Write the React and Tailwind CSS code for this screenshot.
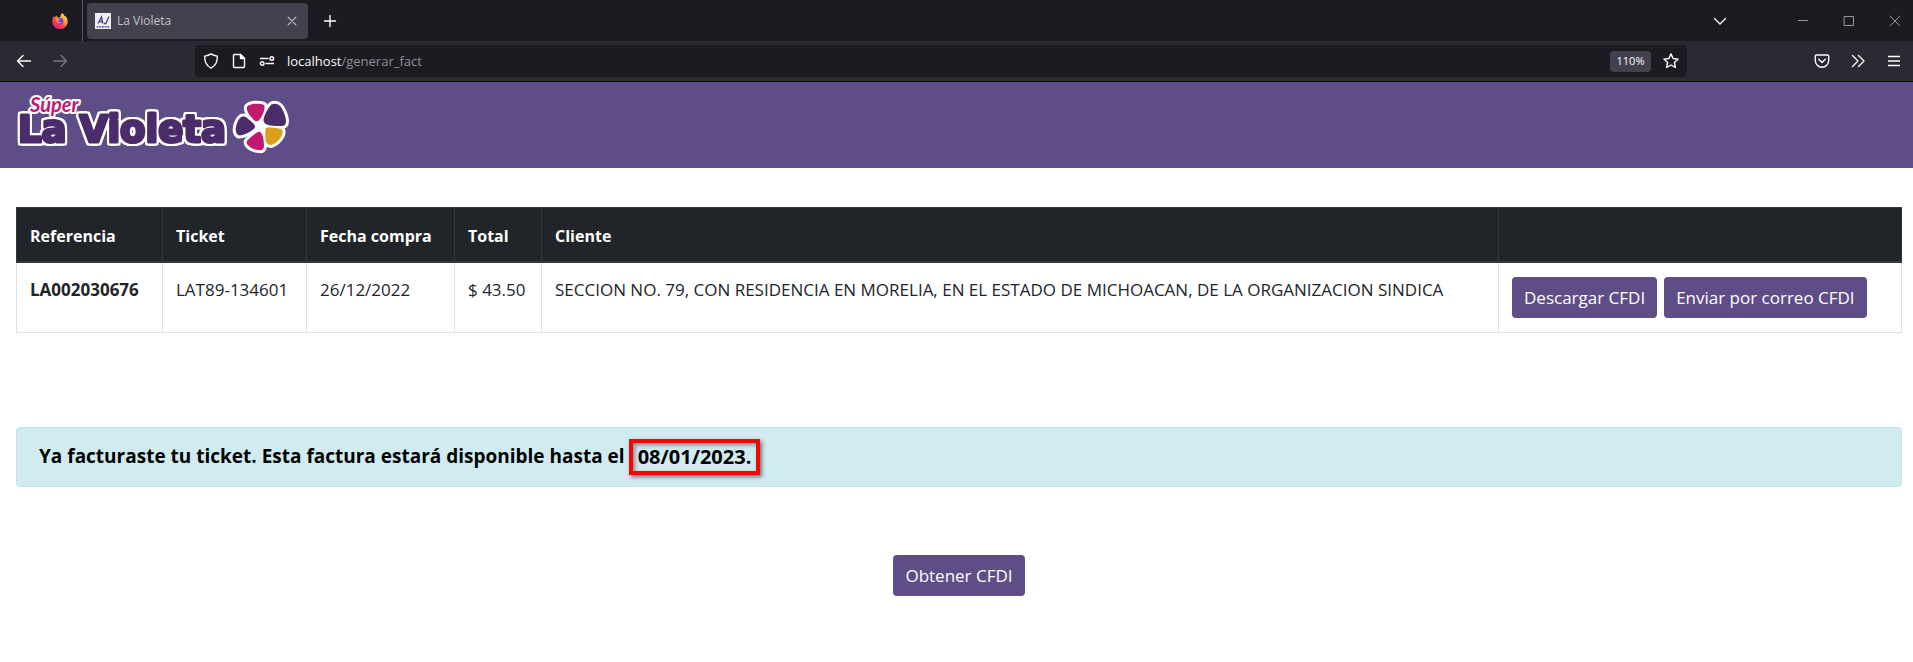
const P = {
  fill: 'none', stroke: 'currentColor', strokeWidth: 1.4, strokeLinecap: 'round', strokeLinejoin: 'round',
};

function Icon({ children, className = 'size-4', box = '0 0 16 16', ...rest }) {
  return (
    <svg viewBox={box} className={className} aria-hidden="true" {...P} {...rest}>
      {children}
    </svg>
  );
}

function Firefox() {
  return (
    <svg viewBox="0 0 16 16" className="size-4" aria-hidden="true">
      <defs>
        <linearGradient id="fire" x1="0.85" y1="0.05" x2="0.2" y2="0.95">
          <stop offset="0" stopColor="#fff04a" />
          <stop offset="0.35" stopColor="#ffa52b" />
          <stop offset="0.65" stopColor="#ff4543" />
          <stop offset="1" stopColor="#e0138a" />
        </linearGradient>
      </defs>
      <path d="M10 0c1.400.9 2.100 2 2.400 3.200C12.900 3 12.800 2.400 12.800 2.400c1.700 1.400 2.900 3.600 2.900 6C15.700 12.600 12.300 16 8 16S.3 12.600.3 8.400C.3 6.200 1 4.300 2 3c.1.8.4 1.200.7 1.500C3.500 3.600 4 3 4.600 2.600c0 .9.500 1.600 1.200 1.800h2.400C8.500 2.800 9 1.200 10 0z" fill="url(#fire)" />
      <circle cx="8.200" cy="8.300" r="3.200" fill="#7a3bd8" />
      <path d="M3.800 5.600c1.600-.6 3 .1 4.200.5-.3 1-1.700 1.100-1.900 1.900.4 1.200 2.200 1.600 3.300.9-1 2.600-5.200 2.300-5.600-3.300z" fill="#ff9a2e" />
    </svg>
  );
}

function Favicon() {
  return (
    <svg viewBox="0 0 16 16" className="size-4 shrink-0" aria-hidden="true">
      <rect width="16" height="16" fill="#efedf3" />
      <path d="M3 10.500 6.500 4l1.300 6.500M4.600 8.500h3M8.800 10.500h2L14 3.500" fill="none" stroke="#4f3f8c" strokeWidth="1.300" />
      <path d="M1.500 13.800h13" stroke="#4f3f8c" strokeWidth="1.300" strokeDasharray="2 0.700" />
    </svg>
  );
}

function Petals(props) {
  return (
    <g {...props}>
      <path className="fill-[#c2186f]" d="M247 107c2-4 14-4 17-2 2 3-2 12-4 14-2 3-5 3-7 0-3-3-7-8-6-12z" />
      <path className="fill-[#4a2c6a]" d="M264 122c-2-3 3-12 6-16 2-3 7-3 10 0 3 3 6 11 6 15 0 3-1 5-5 5-6 0-16 0-17-4z" />
      <path className="fill-[#4a2c6a]" d="M255 127c-1 3-8 7-13 8-3 1-5 0-6-3-1-4 1-11 4-14 2-2 5-2 7 0 4 3 9 7 8 9z" />
      <path className="fill-[#dba019]" d="M266 128c2-1 12 0 15 1 2 1 2 3 1 6-2 5-7 9-11 10-3 0-4-1-5-3-1-4-1-12 0-14z" />
      <path className="fill-[#c2186f]" d="M260 132c3 1 4 9 4 14 0 3-2 5-5 4-5 0-10-3-12-6-1-2 0-4 2-5 3-3 9-8 11-7z" />
    </g>
  );
}

function Logo() {
  return (
    <svg viewBox="0 0 280 66" className="h-[66px] w-[280px]" role="img" aria-label="Súper La Violeta">
      <g transform="translate(-12 -92)">
        <circle cx="260" cy="126" r="9" className="fill-white" />
        <Petals className="stroke-white stroke-[6px] [stroke-linejoin:round]" />
        <g className="[stroke-linejoin:round] [filter:drop-shadow(2px_0_#fff)_drop-shadow(-2px_0_#fff)_drop-shadow(0_2px_#fff)_drop-shadow(0_-2px_#fff)]">
          <text x="18" y="142" className="fill-[#4a2c6a] stroke-[#4a2c6a] stroke-[3px] font-['DejaVu_Sans'] text-[37px] font-bold">La Violeta</text>
        </g>
        <text x="30" y="112" className="fill-[#c2186f] stroke-white stroke-[4px] font-['Lato'] text-[20px] font-bold italic [paint-order:stroke] [stroke-linejoin:round]">Súper</text>
        <Petals />
      </g>
    </svg>
  );
}

const iconButton = 'flex size-8 items-center justify-center';

function Browser() {
  return (
    <div className="bg-[#1c1b22] font-['Open_Sans',sans-serif] text-[#fbfbfe]">
      <div className="flex h-[41px] items-center">
        <div className="flex h-full w-[83px] items-center justify-end border-r border-[#5b5a63] pr-[14px]"><Firefox /></div>
        <div className="ml-1 flex h-9 w-[221px] items-center gap-1.5 rounded bg-[#42414d] px-2 text-xs text-[#c5c4cc]">
          <Favicon />
          <span className="grow">La Violeta</span>
          <button aria-label="Cerrar pestaña" className="flex size-4 items-center justify-center"><Icon strokeWidth={1.2} className="size-3.5"><path d="M3.500 3.500l9 9M12.500 3.500l-9 9" /></Icon></button>
        </div>
        <button aria-label="Nueva pestaña" className={`${iconButton} ml-1.5`}><Icon><path d="M8 2.500v11M2.500 8h11" /></Icon></button>
        <div className="ml-auto flex items-center">
          <button aria-label="Listar pestañas" className={`${iconButton} mr-[51px]`}><Icon><path d="M2.500 5.500L8 11l5.500-5.500" /></Icon></button>
          <div className="flex gap-[14px] pr-[2px] text-[#97969c]">
            <button aria-label="Minimizar" className={iconButton}><Icon strokeWidth={1} strokeLinecap="butt"><path d="M3 7.500h10" /></Icon></button>
            <button aria-label="Maximizar" className={iconButton}><Icon strokeWidth={1} strokeLinejoin="miter"><path d="M3.500 3.500h9v9h-9z" /></Icon></button>
            <button aria-label="Cerrar" className={iconButton}><Icon strokeWidth={1}><path d="M3 3l10 10M13 3L3 13" /></Icon></button>
          </div>
        </div>
      </div>
      <div className="flex h-[41px] items-center border-b border-[#0c0c0d] bg-[#2b2a33] pl-2 pr-[3px]">
        <button aria-label="Atrás" className={iconButton}><Icon><path d="M14.500 8H2M7 2.500L1.500 8 7 13.500" /></Icon></button>
        <button aria-label="Adelante" className={`${iconButton} ml-1 text-[#77767d]`}><Icon><path d="M1.500 8H14M9 2.500L14.500 8 9 13.500" /></Icon></button>
        <div className="ml-[119px] mr-[119px] flex h-8 grow items-center gap-3 rounded bg-[#1c1b22] px-2">
          <Icon><path d="M8 .9c2 1.400 4 1.900 6.300 2.200.3 5-1.300 9.400-6.300 12C3 12.500 1.400 8.100 1.700 3.100 4 2.800 6 2.300 8 .9z" /></Icon>
          <Icon><path d="M9.500 1.500h-6a1 1 0 0 0-1 1v11a1 1 0 0 0 1 1h9a1 1 0 0 0 1-1v-8z" /><path d="M9.500 1.500v4h4z" fill="currentColor" /></Icon>
          <Icon><path d="M1.500 5.500h7.500M7 10.500h7.500" /><circle cx="12.800" cy="5.500" r="1.800" /><circle cx="3.200" cy="10.500" r="1.800" /></Icon>
          <div className="grow pt-0.5 text-[13px]">localhost<span className="text-[#8f8f9a]">/generar_fact</span></div>
          <button className="flex h-[21px] w-[41px] items-center justify-center rounded-sm bg-[#42414d] text-[11px]">110%</button>
          <button aria-label="Añadir marcador"><Icon><path d="M8 .9l2.100 4.600 5 .6-3.700 3.400 1 5L8 12l-4.400 2.500 1-5L.9 6.100l5-.6z" /></Icon></button>
        </div>
        <div className="flex items-center gap-1">
          <button aria-label="Guardar en Pocket" className={iconButton}><Icon><path d="M2.500 2h11c.7 0 1.200.5 1.200 1.200v4.300a6.700 6.700 0 0 1-13.400 0V3.200C1.300 2.500 1.800 2 2.500 2zM4.700 6.300L8 9.400l3.300-3.100" /></Icon></button>
          <button aria-label="Más herramientas" className={iconButton}><Icon><path d="M2.500 2.500L8 8l-5.500 5.500M8.500 2.500L14 8l-5.500 5.500" /></Icon></button>
          <button aria-label="Menú" className={iconButton}><Icon strokeLinecap="butt"><path d="M2 3.500h12M2 8h12M2 12.500h12" /></Icon></button>
        </div>
      </div>
    </div>
  );
}

const button = 'h-[41px] rounded bg-[#5f4d87] px-3 pt-0.5 text-[17px] text-white';
const head = 'h-[54px] border border-[#32383e] border-b-2 px-[13px] pt-1 text-left font-bold';
const cell = 'border border-[#dee2e6] px-[13px] py-[14px] text-left align-top text-[17px] leading-[26px]';

export default function App() {
  return (
    <div className="min-h-screen bg-white font-['Open_Sans',sans-serif] text-base text-[#212529]">
      <Browser />
      <header className="flex h-[86px] items-center bg-[#5f4d87] pl-3"><Logo /></header>
      <main className="pl-4 pr-[11px] pt-[39px]">
        <table className="w-full table-fixed border-collapse whitespace-nowrap">
          <colgroup>
            <col className="w-[146px]" /><col className="w-[144px]" /><col className="w-[148px]" /><col className="w-[87px]" /><col /><col className="w-[403px]" />
          </colgroup>
          <thead className="bg-[#212529] text-white">
            <tr>
              <th className={head}>Referencia</th><th className={head}>Ticket</th><th className={head}>Fecha compra</th>
              <th className={head}>Total</th><th className={head}>Cliente</th><th className={head} aria-label="Acciones"></th>
            </tr>
          </thead>
          <tbody>
            <tr>
              <th className={cell}>LA002030676</th>
              <td className={cell}>LAT89-134601</td>
              <td className={cell}>26/12/2022</td>
              <td className={cell}>$ 43.50</td>
              <td className={cell}>SECCION NO. 79, CON RESIDENCIA EN MORELIA, EN EL ESTADO DE MICHOACAN, DE LA ORGANIZACION SINDICA</td>
              <td className={cell}>
                <div className="flex gap-[7px]">
                  <button className={button}>Descargar CFDI</button>
                  <button className={button}>Enviar por correo CFDI</button>
                </div>
              </td>
            </tr>
          </tbody>
        </table>
        <div role="alert" className="mt-[94px] flex h-[60px] items-center rounded border border-[#bee5eb] bg-[#d1ecf1] px-[22px] text-[19px] font-bold text-black">
          <p>Ya facturaste tu ticket. Esta factura estará disponible hasta el</p>
          <span className="ml-1 border-4 border-[#fe0000] px-[5px] text-xl leading-7 shadow-[2px_2px_4px_rgba(0,0,0,0.5),inset_2px_2px_4px_rgba(0,0,0,0.4)]">08/01/2023.</span>
        </div>
        <div className="mt-[68px] flex justify-center"><button className={button}>Obtener CFDI</button></div>
      </main>
    </div>
  );
}
